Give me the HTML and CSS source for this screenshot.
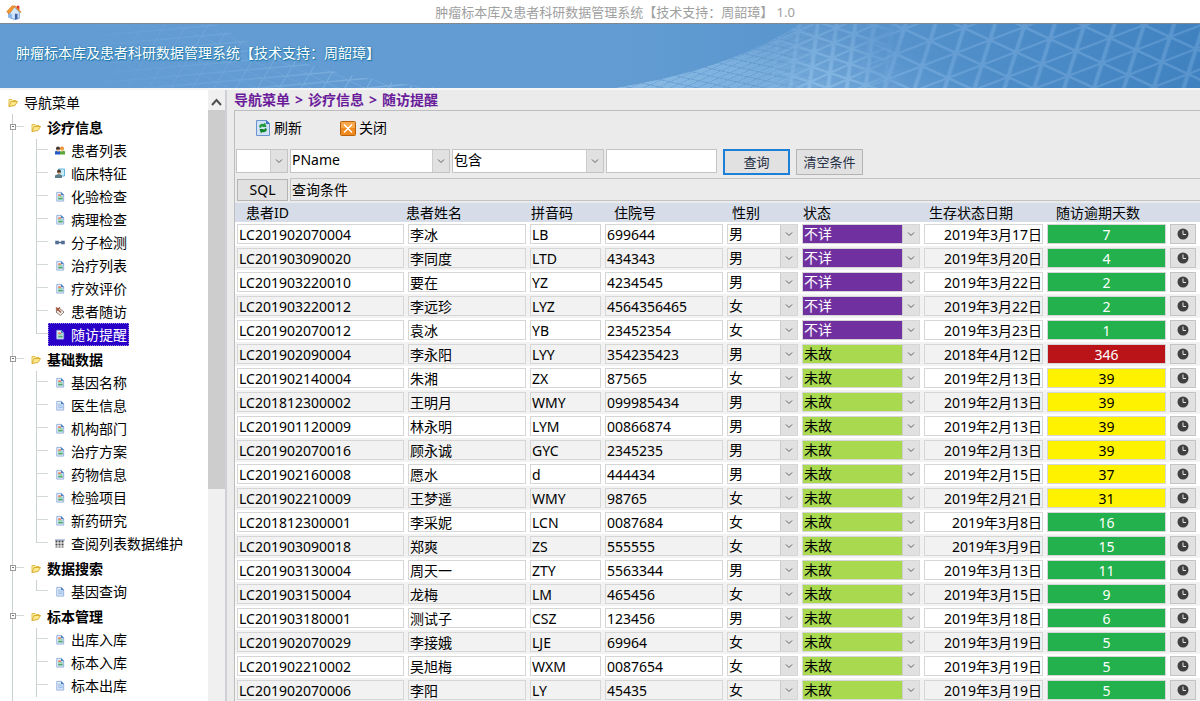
FILE: index.html
```html
<!DOCTYPE html>
<html lang="zh-CN">
<head>
    <meta charset="UTF-8">
    <title>肿瘤标本库及患者科研数据管理系统</title>
    <link rel="stylesheet" href="styles.css">
</head>
<body>

    <!-- 图标 -->
    <svg class="sprite" aria-hidden="true">
        <symbol id="i-folder" viewBox="0 0 10 10">
            <path d="M1 9V2h3l1 1h3v1.500" fill="#fdf0a0" stroke="#e3bd4a"/>
            <path d="M1 9l2-5h6.500L7 8z" fill="#fbe98a" stroke="#dcae36"/>
        </symbol>
        <symbol id="i-doc" viewBox="0 0 10 12">
            <path d="M1.500 1.500h5l2.500 2.500v7H1.500z" fill="#e6f0fb" stroke="#8fabdb"/>
            <path d="M6 1v3.500h3.500z" fill="#4d7fc4"/>
            <path d="M3 4.500h3" stroke="#ea6a3c" stroke-width="1.500"/>
            <path d="M3 6.500h5" stroke="#4fb56c"/>
            <path d="M3 8.500h5" stroke="#3fa060" stroke-width="1.500"/>
        </symbol>
        <symbol id="i-text" viewBox="0 0 10 12">
            <path d="M1.500 1.500h5l2.500 2.500v7H1.500z" fill="#e6f0fb" stroke="#8fabdb"/>
            <path d="M6 1v3.500h3.500z" fill="#4d7fc4"/>
            <path d="M3 4.500h2.500M3 6.500h5M3 8.500h5" stroke="#7fa8e0"/>
        </symbol>
        <symbol id="i-users" viewBox="0 0 10 10">
            <circle cx="3" cy="3" r="2" fill="#40302a"/>
            <circle cx="7" cy="3" r="2" fill="#e8912e"/>
            <path d="M0 9V6q3-2 5 0v3z" fill="#2459c8"/>
            <path d="M5 9V6q3-2 5 0v3z" fill="#5aa83a"/>
            <path d="M2 4h2v2H2zM6 4h2v2H6z" fill="#f3bf8a"/>
        </symbol>
        <symbol id="i-patient" viewBox="0 0 10 10">
            <path d="M3.500 .5h6v7h-6z" fill="#c4ecfa" stroke="#62b4dc"/>
            <circle cx="4" cy="3" r="2" fill="#4b3c30"/>
            <path d="M3 4h2v2H3z" fill="#e6a86c"/>
            <path d="M0 9.500V7q4-2.500 7 0v2.500z" fill="#5c7c8c"/>
        </symbol>
        <symbol id="i-link" viewBox="0 0 10 10">
            <path d="M1 4h2v2H1zM7 4h2v2H7zM3.500 5h3" fill="none" stroke="#4c6690" stroke-width="1.500"/>
        </symbol>
        <symbol id="i-visit" viewBox="0 0 10 10">
            <path d="M4.500 2L9 5.500 5.500 9 1 5.500z" fill="#f4f0ec" stroke="#8a7d78"/>
            <path d="M1 1l5 5M1 4l4-3" stroke="#a0543c" stroke-width="1.500"/>
        </symbol>
        <symbol id="i-lists" viewBox="0 0 10 10">
            <path d="M0 1.500h10" stroke="#7a9cc8"/>
            <path d="M1.500 2v7M4.500 2v7M7.500 2v7" stroke="#444" stroke-width="2" stroke-dasharray="2 1"/>
        </symbol>
        <symbol id="i-clock" viewBox="0 0 12 12">
            <circle cx="6" cy="6" r="5.500" fill="#404040"/>
            <path d="M6 2.500V6.500H9" fill="none" stroke="#e6e6e6"/>
        </symbol>
    </svg>

    <div class="titlebar">
        <svg class="home" viewBox="0 0 18 18" aria-hidden="true">
            <path d="M12 2h3v5h-3z" fill="#d9301e"/>
            <path d="M3 8l6-5 6 6v7l-5 1.500L3 15z" fill="#d4e8fb" stroke="#6a9cd8"/>
            <path d="M3 9l4 3v4l-4-1z" fill="#8cb8ee"/>
            <path d="M1 8.500L7 2l3 .5L5 9.500 3 11z" fill="#f79a2c" stroke="#cf6a1c" stroke-width=".7"/>
            <path d="M9.500 2L17 9.500" stroke="#e58a3a" stroke-width="1.500"/>
            <path d="M10 11h3v6l-3 .5z" fill="#3f62a8"/>
        </svg>
        <span class="window-title">肿瘤标本库及患者科研数据管理系统【技术支持：周韶璋】 1.0</span>
    </div>

    <header class="banner">
        <svg class="mesh" viewBox="0 0 1200 64" preserveAspectRatio="xMidYMid slice" aria-hidden="true">
            <defs>
                <linearGradient id="sky" x2="1" y2="0">
                    <stop offset="0" stop-color="#629cd3"/>
                    <stop offset=".5" stop-color="#629cd2"/>
                    <stop offset="1" stop-color="#4a8cc7"/>
                </linearGradient>
                <linearGradient id="hill" gradientUnits="userSpaceOnUse" x1="615" y1="64" x2="1200" y2="0">
                    <stop offset="0" stop-color="#8bbbe5"/>
                    <stop offset=".35" stop-color="#74a9da"/>
                    <stop offset=".6" stop-color="#5c9ad2"/>
                    <stop offset="1" stop-color="#4386c4"/>
                </linearGradient>
                <linearGradient id="depth" gradientUnits="userSpaceOnUse" x1="820" y1="0" x2="800" y2="64">
                    <stop offset="0" stop-color="#3878b8" stop-opacity=".35"/>
                    <stop offset="1" stop-color="#3878b8" stop-opacity="0"/>
                </linearGradient>
                <pattern id="net-l" width="10" height="10" patternUnits="userSpaceOnUse" patternTransform="matrix(2.600 1.200 3.400 -1.300 1102 39)">
                    <path d="M0 0H10M0 0V10M0 10H10M10 0V10M10 0L0 10" fill="none" stroke="#84b7e6" stroke-width="1"/>
                </pattern>
                <pattern id="net-m" width="10" height="10" patternUnits="userSpaceOnUse" patternTransform="matrix(1.800 .6 2 -.9 850 40)">
                    <path d="M0 0H10M0 0V10M0 10H10M10 0V10M10 0L0 10" fill="none" stroke="#9ccaf0" stroke-width="1.500"/>
                </pattern>
                <pattern id="net-s" width="10" height="10" patternUnits="userSpaceOnUse" patternTransform="matrix(.9 .2 1.100 -.5 700 50)">
                    <path d="M0 0H10M0 0V10" fill="none" stroke="#5590c6" stroke-width="2"/>
                </pattern>
                <pattern id="net-w" width="10" height="10" patternUnits="userSpaceOnUse" patternTransform="matrix(1.700 .8 -.6 1 230 0)">
                    <path d="M0 0H10M0 0V10M10 0L0 10" fill="none" stroke="#a4cdf0" stroke-width="1"/>
                </pattern>
                <linearGradient id="f-right" gradientUnits="userSpaceOnUse" x1="850" y1="0" x2="1200" y2="0">
                    <stop offset="0" stop-color="#fff" stop-opacity="0"/>
                    <stop offset=".15" stop-color="#fff" stop-opacity=".9"/>
                    <stop offset="1" stop-color="#fff" stop-opacity=".6"/>
                </linearGradient>
                <linearGradient id="f-mid" gradientUnits="userSpaceOnUse" x1="760" y1="0" x2="905" y2="0">
                    <stop offset="0" stop-color="#fff" stop-opacity="0"/>
                    <stop offset=".4" stop-color="#fff" stop-opacity=".6"/>
                    <stop offset=".65" stop-color="#fff" stop-opacity=".6"/>
                    <stop offset="1" stop-color="#fff" stop-opacity="0"/>
                </linearGradient>
                <linearGradient id="f-far" gradientUnits="userSpaceOnUse" x1="615" y1="0" x2="840" y2="0">
                    <stop offset="0" stop-color="#fff" stop-opacity=".6"/>
                    <stop offset=".7" stop-color="#fff" stop-opacity=".6"/>
                    <stop offset="1" stop-color="#fff" stop-opacity="0"/>
                </linearGradient>
                <linearGradient id="f-left" x2="1" y2="0">
                    <stop offset="0" stop-color="#fff" stop-opacity="0"/>
                    <stop offset=".5" stop-color="#fff" stop-opacity=".25"/>
                    <stop offset="1" stop-color="#fff" stop-opacity=".6"/>
                </linearGradient>
                <mask id="m-right"><rect x="850" width="350" height="64" fill="url(#f-right)"/></mask>
                <mask id="m-mid"><path d="M760 64V24L800 0H905V64z" fill="url(#f-mid)"/></mask>
                <mask id="m-far"><path d="M615 64Q730 46 800 0H840V64z" fill="url(#f-far)"/></mask>
                <mask id="m-left"><path d="M60 0H215Q300 52 440 64H60z" fill="url(#f-left)"/></mask>
            </defs>
            <rect width="1200" height="64" fill="url(#sky)"/>
            <path d="M615 64Q730 46 800 0H1200V64z" fill="url(#hill)"/>
            <rect x="615" width="225" height="64" fill="url(#net-s)" mask="url(#m-far)"/>
            <rect x="760" width="145" height="64" fill="url(#net-m)" mask="url(#m-mid)"/>
            <rect x="850" width="350" height="64" fill="url(#net-l)" mask="url(#m-right)"/>
            <rect x="60" width="380" height="64" fill="url(#net-w)" mask="url(#m-left)"/>
            <path d="M615 64Q730 46 800 0H1200V64z" fill="url(#depth)"/>
        </svg>
        <h1>肿瘤标本库及患者科研数据管理系统【技术支持：周韶璋】</h1>
    </header>

    <div class="layout">
        <aside class="sidebar">
            <nav class="tree">
                <a class="root" href="#"><svg><use href="#i-folder"/></svg>导航菜单</a>
                <ul>
                    <li class="group">
                        <a class="head" href="#"><i class="toggle"></i><svg><use href="#i-folder"/></svg>诊疗信息</a>
                        <ul class="items">
                            <li><a href="#"><svg><use href="#i-users"/></svg>患者列表</a></li>
                            <li><a href="#"><svg><use href="#i-patient"/></svg>临床特征</a></li>
                            <li><a href="#"><svg><use href="#i-doc"/></svg>化验检查</a></li>
                            <li><a href="#"><svg><use href="#i-doc"/></svg>病理检查</a></li>
                            <li><a href="#"><svg><use href="#i-link"/></svg>分子检测</a></li>
                            <li><a href="#"><svg><use href="#i-doc"/></svg>治疗列表</a></li>
                            <li><a href="#"><svg><use href="#i-doc"/></svg>疗效评价</a></li>
                            <li><a href="#"><svg><use href="#i-visit"/></svg>患者随访</a></li>
                            <li><a class="active" href="#"><svg><use href="#i-doc"/></svg>随访提醒</a></li>
                        </ul>
                    </li>
                    <li class="group">
                        <a class="head" href="#"><i class="toggle"></i><svg><use href="#i-folder"/></svg>基础数据</a>
                        <ul class="items">
                            <li><a href="#"><svg><use href="#i-doc"/></svg>基因名称</a></li>
                            <li><a href="#"><svg><use href="#i-text"/></svg>医生信息</a></li>
                            <li><a href="#"><svg><use href="#i-doc"/></svg>机构部门</a></li>
                            <li><a href="#"><svg><use href="#i-doc"/></svg>治疗方案</a></li>
                            <li><a href="#"><svg><use href="#i-doc"/></svg>药物信息</a></li>
                            <li><a href="#"><svg><use href="#i-doc"/></svg>检验项目</a></li>
                            <li><a href="#"><svg><use href="#i-doc"/></svg>新药研究</a></li>
                            <li><a href="#"><svg><use href="#i-lists"/></svg>查阅列表数据维护</a></li>
                        </ul>
                    </li>
                    <li class="group">
                        <a class="head" href="#"><i class="toggle"></i><svg><use href="#i-folder"/></svg>数据搜索</a>
                        <ul class="items">
                            <li><a href="#"><svg><use href="#i-text"/></svg>基因查询</a></li>
                        </ul>
                    </li>
                    <li class="group open">
                        <a class="head" href="#"><i class="toggle"></i><svg><use href="#i-folder"/></svg>标本管理</a>
                        <ul class="items">
                            <li><a href="#"><svg><use href="#i-doc"/></svg>出库入库</a></li>
                            <li><a href="#"><svg><use href="#i-doc"/></svg>标本入库</a></li>
                            <li><a href="#"><svg><use href="#i-text"/></svg>标本出库</a></li>
                        </ul>
                    </li>
                </ul>
            </nav>
            <div class="scrollbar">
                <svg viewBox="0 0 17 20" aria-hidden="true"><path d="M4 15l4.500-5 4.500 5" fill="none" stroke="#505050" stroke-width="2"/></svg>
                <div class="thumb"></div>
            </div>
        </aside>

        <main class="content">
            <div class="breadcrumb">
                <span>导航菜单</span><span>&gt;</span><span>诊疗信息</span><span>&gt;</span><span>随访提醒</span>
            </div>

            <div class="panel">
                <div class="toolbar">
                    <button type="button">
                        <svg viewBox="0 0 16 16" aria-hidden="true">
                            <path d="M1.500 .5h10l3 3v12h-13z" fill="#cfe2f8" stroke="#6b93cc"/>
                            <path d="M11 0v4h4z" fill="#3c73c4"/>
                            <path d="M4 7q1-4 5-3l1-1.500 1.500 4.500H7l1-1q-2 0-2 2z" fill="#1f9a35"/>
                            <path d="M12 9q-1 4-5 3l-1 1.500L4.500 9H9l-1 1q2 0 2-2z" fill="#128428"/>
                        </svg>
                        刷新
                    </button>
                    <button type="button">
                        <svg viewBox="0 0 16 16" aria-hidden="true">
                            <rect x=".5" y="1.500" width="15" height="14" rx="1" fill="#f08a1e" stroke="#b8620f"/>
                            <path d="M1 2h14v6H1z" fill="#f7a64a"/>
                            <path d="M4 4.500l8 8M12 4.500l-8 8" stroke="#fff" stroke-width="1.500"/>
                        </svg>
                        关闭
                    </button>
                </div>

                <form class="filters">
                    <select class="w-logic" aria-label="逻辑"><option></option></select>
                    <select class="w-field" aria-label="字段"><option>PName</option></select>
                    <select class="w-match" aria-label="匹配方式"><option>包含</option></select>
                    <input class="w-value" type="text" aria-label="查询值">
                    <button class="primary" type="button">查询</button>
                    <button type="button">清空条件</button>
                </form>

                <div class="sql">
                    <button type="button">SQL</button>
                    <input type="text" value="查询条件" aria-label="查询条件" readonly>
                </div>

                <table class="grid">
                    <colgroup>
                        <col class="c-id"><col class="c-mid"><col class="c-small"><col class="c-mid"><col class="c-small">
                        <col class="c-mid"><col class="c-date"><col class="c-date"><col class="c-btn">
                    </colgroup>
                    <thead>
                        <tr>
                            <th class="in-l">患者ID</th>
                            <th>患者姓名</th>
                            <th class="in-s">拼音码</th>
                            <th class="in-l">住院号</th>
                            <th class="in-m">性别</th>
                            <th class="in-s">状态</th>
                            <th class="in-m">生存状态日期</th>
                            <th class="in-l">随访逾期天数</th>
                            <th></th>
                        </tr>
                    </thead>
                    <tbody id="rows"></tbody>
                </table>
            </div>
        </main>
    </div>

    <script src="script.js"></script>
</body>
</html>
```

FILE: styles.css
```css
* {
    box-sizing: border-box;
}
body {
    margin: 0;
    height: 100vh;
    overflow: hidden;
    display: flex;
    flex-direction: column;
    background: #ebebeb;
    color: #000;
    font-family: "Noto Sans", "Noto Sans CJK SC", sans-serif;
    font-size: 14px;
    line-height: 20px;
}
button, input, select {
    font: inherit;
    color: inherit;
    margin: 0;
    border-radius: 0;
}
ul {
    list-style: none;
    margin: 0;
    padding: 0;
}
a {
    color: inherit;
    text-decoration: none;
}
.sprite {
    display: none;
}

/* 标题栏 */
.titlebar {
    display: flex;
    align-items: center;
    flex: none;
    height: 23px;
    padding: 0 6px;
    background: #fff;
}
.home {
    width: 16px;
    height: 18px;
}
.window-title {
    flex: 1;
    padding-left: 14px;
    text-align: center;
    font-size: 13px;
    color: #a0a0a0;
}
.banner {
    display: grid;
    flex: none;
    align-items: center;
    height: 67px;
    border-top: 1px solid #808890;
    border-bottom: 2px solid #f4f6f8;
    overflow: hidden;
}
.banner > * {
    grid-area: 1 / 1;
}
.mesh {
    display: block;
    width: 100%;
    height: 64px;
}
.banner h1 {
    margin: 0;
    padding: 0 16px 6px;
    font-size: 14px;
    font-weight: normal;
    color: #fff;
    text-shadow: 0 0 2px #1b78a8, 1px 1px 1px #1b78a8;
}

.layout {
    flex: 1;
    display: flex;
    min-height: 0;
}

/* 导航树 */
.sidebar {
    display: flex;
    flex: none;
    width: 227px;
    background: #fff;
    border-right: 2px solid #cfcfd6;
}
.tree {
    flex: 1;
    overflow: hidden;
    padding-top: 1px;
}
.tree a {
    display: inline-flex;
    align-items: center;
    height: 23px;
    white-space: nowrap;
}
.tree svg {
    width: 10px;
    height: 11px;
    margin-right: 6px;
}
.tree .root {
    display: flex;
    padding-left: 8px;
}
.group {
    padding-top: 2px;
    background: linear-gradient(#c9d2d0, #c9d2d0) 12px 0 / 1px 100% no-repeat;
}
.group .head {
    display: flex;
    font-weight: bold;
    background: linear-gradient(#d3dad8, #d3dad8) 15px 10px / 9px 1px no-repeat;
}
.toggle {
    width: 6px;
    height: 6px;
    margin: 0 15px 2px 10px;
    border: 1px solid #9a9a9a;
    background: linear-gradient(#777, #777) 1px 1px / 2px 1px no-repeat #fff;
}
.items li {
    height: 23px;
    padding-left: 48px;
    background:
        linear-gradient(#c9d2d0, #c9d2d0) 36px 0 / 1px 100% no-repeat,
        linear-gradient(#d3dad8, #d3dad8) 36px 10px / 12px 1px no-repeat;
}
.items li:last-child {
    background-size: 1px 11px, 12px 1px;
}
.open .items li:last-child {
    background-size: 1px 100%, 12px 1px;
}
.items a {
    padding: 0 2px 0 7px;
}
.items a.active {
    background: #2a00c8;
    color: #fff;
    outline: 1px dotted #8f80e0;
    outline-offset: -1px;
}
.open {
    padding-bottom: 20px;
}
.scrollbar {
    display: flex;
    flex-direction: column;
    width: 17px;
    background: #f0f0f0;
}
.scrollbar svg {
    flex: none;
    height: 20px;
}
.thumb {
    height: 62%;
    background: #cdcdcd;
}

/* 右侧内容 */
.content {
    flex: 1;
    display: flex;
    flex-direction: column;
    min-width: 0;
    padding-left: 7px;
}
.breadcrumb {
    display: flex;
    flex: none;
    gap: 5px;
    height: 20px;
    font-weight: bold;
    color: #6a1b9a;
}
.panel {
    flex: 1;
    min-height: 0;
    overflow: hidden;
    border-top: 1px solid #bdbdbd;
    border-left: 1px solid #bdbdbd;
}
.toolbar {
    display: flex;
    gap: 38px;
    height: 38px;
    padding: 0 20px 4px;
    align-items: center;
}
.toolbar button {
    display: flex;
    align-items: center;
    gap: 3px;
    padding: 0;
    border: 0;
    background: none;
}
.toolbar svg {
    width: 16px;
    height: 16px;
}

select {
    appearance: none;
    padding: 0 20px 0 1px;
    border: 1px solid #c4c4c4;
    background: url("data:image/svg+xml,%3Csvg xmlns='http://www.w3.org/2000/svg' width='18' height='24'%3E%3Cpath d='M0 0h18v24H0z' fill='%23e1e1e1'/%3E%3Cpath d='M.5 0v24' stroke='%23cccccc'/%3E%3Cpath d='M6 10.500l3 3 3-3' fill='none' stroke='%23606060'/%3E%3C/svg%3E") right center no-repeat #fff;
    background-origin: border-box;
}
input {
    min-width: 0;
    padding: 0 1px;
    border: 1px solid #c4c4c4;
    background: #fff;
}
.filters {
    display: flex;
    gap: 2px;
    height: 29px;
    padding-left: 1px;
    align-items: flex-start;
}
.filters select, .filters input {
    height: 24px;
    padding-bottom: 3px;
}
.w-logic {
    width: 52px;
}
.w-field {
    width: 160px;
}
.w-match {
    width: 152px;
}
.w-value {
    width: 111px;
}
.filters button, .sql button {
    border: 1px solid #b4b4b4;
    background: #e1e1e1;
    padding: 0;
}
.filters button {
    width: 67px;
    height: 26px;
    margin-left: 4px;
    font-size: 13px;
    color: #1f2f45;
}
.filters .primary {
    border: 2px solid #1c80d8;
}
.sql {
    display: flex;
    gap: 2px;
    height: 25px;
    padding-left: 2px;
    align-items: flex-start;
}
.sql button {
    width: 51px;
    height: 22px;
    margin-top: 1px;
    line-height: 18px;
}
.sql input {
    flex: 1;
    height: 23px;
    padding-bottom: 2px;
    border-right: 0;
    background: #ebebeb;
}

/* 数据表 */
.grid {
    width: 100%;
    table-layout: fixed;
    border-collapse: collapse;
}
.c-id {
    width: 171px;
}
.c-mid {
    width: 122px;
}
.c-small {
    width: 75px;
}
.c-date {
    width: 123px;
}
.c-btn {
    width: 32px;
}
.grid th {
    height: 19px;
    padding: 0;
    background: #d6dde8;
    font-weight: normal;
    line-height: 19px;
    text-align: left;
    white-space: nowrap;
}
.grid .in-s {
    padding-left: 3px;
}
.grid .in-m {
    padding-left: 7px;
}
.grid .in-l {
    padding-left: 11px;
}
.grid td {
    height: 24px;
    padding: 0 2px;
    background: #fff;
    line-height: 18px;
}
.grid tr:nth-child(even) td {
    background: #f2f2f2;
}
.grid td input, .grid td select, .grid td button {
    display: block;
    width: 100%;
    height: 20px;
    line-height: 18px;
    border: 1px solid #d6d6d6;
}
.grid td input {
    background: transparent;
}
.grid td select {
    background-color: transparent;
}
.grid td .date {
    padding-right: 0;
    text-align: right;
}
.grid td .days {
    text-align: center;
}
.grid td .unknown {
    background-color: #7030a0;
    color: #fff;
}
.grid td .alive {
    background-color: #a8d94f;
}
.grid td .green {
    background: #22b14c;
    color: #fff;
}
.grid td .red {
    background: #ba1419;
    color: #fff;
}
.grid td .yellow {
    background: #fff200;
}
.grid td button {
    display: flex;
    align-items: center;
    justify-content: center;
    padding: 0;
    border-color: #c4c4c4;
    background: #e1e1e1;
}
.grid td button svg {
    width: 12px;
    height: 12px;
}
.grid td:last-child {
    padding-right: 4px;
}
```

FILE: script.js
```js
const patients = [
    ["LC201902070004", "李冰", "LB", "699644", "男", "不详", "2019年3月17日", 7],
    ["LC201903090020", "李同度", "LTD", "434343", "男", "不详", "2019年3月20日", 4],
    ["LC201903220010", "要在", "YZ", "4234545", "男", "不详", "2019年3月22日", 2],
    ["LC201903220012", "李远珍", "LYZ", "4564356465", "女", "不详", "2019年3月22日", 2],
    ["LC201902070012", "袁冰", "YB", "23452354", "女", "不详", "2019年3月23日", 1],
    ["LC201902090004", "李永阳", "LYY", "354235423", "男", "未故", "2018年4月12日", 346],
    ["LC201902140004", "朱湘", "ZX", "87565", "女", "未故", "2019年2月13日", 39],
    ["LC201812300002", "王明月", "WMY", "099985434", "男", "未故", "2019年2月13日", 39],
    ["LC201901120009", "林永明", "LYM", "00866874", "男", "未故", "2019年2月13日", 39],
    ["LC201902070016", "顾永诚", "GYC", "2345235", "男", "未故", "2019年2月13日", 39],
    ["LC201902160008", "愿水", "d", "444434", "男", "未故", "2019年2月15日", 37],
    ["LC201902210009", "王梦遥", "WMY", "98765", "女", "未故", "2019年2月21日", 31],
    ["LC201812300001", "李采妮", "LCN", "0087684", "女", "未故", "2019年3月8日", 16],
    ["LC201903090018", "郑爽", "ZS", "555555", "女", "未故", "2019年3月9日", 15],
    ["LC201903130004", "周天一", "ZTY", "5563344", "男", "未故", "2019年3月13日", 11],
    ["LC201903150004", "龙梅", "LM", "465456", "女", "未故", "2019年3月15日", 9],
    ["LC201903180001", "测试子", "CSZ", "123456", "男", "未故", "2019年3月18日", 6],
    ["LC201902070029", "李接娥", "LJE", "69964", "女", "未故", "2019年3月19日", 5],
    ["LC201902210002", "吴旭梅", "WXM", "0087654", "女", "未故", "2019年3月19日", 5],
    ["LC201902070006", "李阳", "LY", "45435", "女", "未故", "2019年3月19日", 5]
];

function daysColor(days) {
    if (days > 90) return "red";
    if (days > 30) return "yellow";
    return "green";
}

function textBox(label, value, cls) {
    return `<td><input type="text" class="${cls || ""}" aria-label="${label}" value="${value}"></td>`;
}

function dropDown(label, value, cls) {
    return `<td><select class="${cls || ""}" aria-label="${label}"><option>${value}</option></select></td>`;
}

document.getElementById("rows").innerHTML = patients.map(p => `
    <tr>
        ${textBox("患者ID", p[0])}
        ${textBox("患者姓名", p[1])}
        ${textBox("拼音码", p[2])}
        ${textBox("住院号", p[3])}
        ${dropDown("性别", p[4])}
        ${dropDown("状态", p[5], p[5] === "不详" ? "unknown" : "alive")}
        ${textBox("生存状态日期", p[6], "date")}
        ${textBox("随访逾期天数", p[7], "days " + daysColor(p[7]))}
        <td><button type="button" aria-label="随访"><svg><use href="#i-clock"/></svg></button></td>
    </tr>`).join("");
```
